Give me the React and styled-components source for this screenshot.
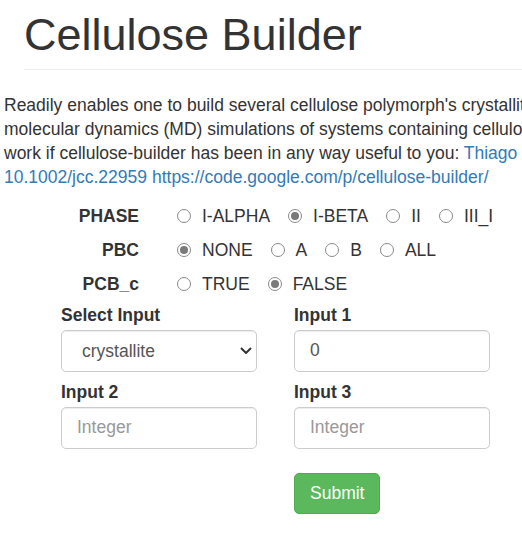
import styled, { createGlobalStyle } from "styled-components";

const GlobalStyle = createGlobalStyle`
	body {
		margin: 0;
		font-family: "Liberation Sans", Arial, Helvetica, sans-serif;
		font-size: 17.5px;
		line-height: 24px;
		color: #333;
		background: #fff;
		overflow-x: hidden;
	}
	* {
		box-sizing: border-box;
	}
`;

const phases = ["I-ALPHA", "I-BETA", "II", "III_I"];
const pbcs = ["NONE", "A", "B", "ALL"];
const pcbc = ["TRUE", "FALSE"];

const RadioRow = ({ label, name, options, checked }) => (
	<>
		<RowLabel>{label}</RowLabel>
		<Options>
			{options.map(opt => (
				<Option key={opt}>
					<Radio
						type="radio"
						name={name}
						value={opt}
						defaultChecked={opt === checked}
					/>
					{opt}
				</Option>
			))}
		</Options>
	</>
);

const App = () => {
	return (
		<Page>
			<GlobalStyle />
			<Header>
				<Title>Cellulose Builder</Title>
			</Header>
			<Intro>
				Readily enables one to build several cellulose polymorph's crystallites for
				<br />
				molecular dynamics (MD) simulations of systems containing cellulose. Please cite the following
				<br />
				work if cellulose-builder has been in any way useful to you:{" "}
				<Link href="#">Thiago C. F. Gomes and Munir S. Skaf, J. Comput. Chem. 2012, 33, 1338, DOI:</Link>
				<br />
				<Link href="#">10.1002/jcc.22959</Link>{" "}
				<Link href="#">https://code.google.com/p/cellulose-builder/</Link>
			</Intro>
			<RadioGrid>
				<RadioRow label="PHASE" name="phase" options={phases} checked="I-BETA" />
				<RadioRow label="PBC" name="pbc" options={pbcs} checked="NONE" />
				<RadioRow label="PCB_c" name="pcbc" options={pcbc} checked="FALSE" />
			</RadioGrid>
			<Form>
				<Group>
					<FieldLabel>Select Input</FieldLabel>
					<SelectWrap>
						<Select defaultValue="crystallite">
							<option value="crystallite">crystallite</option>
							<option value="monolayer">monolayer</option>
							<option value="fibril">fibril</option>
						</Select>
						<Chevron width="12" height="7" viewBox="0 0 12 7">
							<polyline points="1,1 6,6 11,1" />
						</Chevron>
					</SelectWrap>
				</Group>
				<Group>
					<FieldLabel>Input 1</FieldLabel>
					<Input type="text" defaultValue="0" />
				</Group>
				<Group>
					<FieldLabel>Input 2</FieldLabel>
					<Input type="text" placeholder="Integer" />
				</Group>
				<Group>
					<FieldLabel>Input 3</FieldLabel>
					<Input type="text" placeholder="Integer" />
				</Group>
				<Submit type="button">Submit</Submit>
			</Form>
		</Page>
	);
};

export default App;

const Page = styled.div`
	width: 522px;
	padding-bottom: 20px;
`;

const Header = styled.div`
	margin-left: 24px;
	padding: 10px 0 9.5px;
	border-bottom: 1px solid #eee;
`;

const Title = styled.h1`
	margin: 0;
	font-size: 45px;
	font-weight: 500;
	line-height: 49.5px;
	color: #333;
`;

const Intro = styled.p`
	margin: 23px 0 10px 4px;
	white-space: nowrap;
`;

const Link = styled.a`
	color: #337ab7;
	text-decoration: none;
`;

const RadioGrid = styled.div`
	display: grid;
	grid-template-columns: 139px auto;
	column-gap: 38px;
	grid-auto-rows: 34px;
	align-items: center;
`;

const RowLabel = styled.div`
	font-weight: bold;
	text-align: right;
	line-height: 34px;
`;

const Options = styled.div`
	display: flex;
	align-items: center;
	gap: 18px;
	line-height: 34px;
`;

const Option = styled.label`
	display: flex;
	align-items: center;
	gap: 11px;
`;

const Radio = styled.input`
	appearance: none;
	margin: 0;
	width: 14px;
	height: 14px;
	border: 1px solid #8a8a8a;
	border-radius: 50%;
	background: #fff;
	display: grid;
	place-items: center;

	&:checked::after {
		content: "";
		width: 8px;
		height: 8px;
		border-radius: 50%;
		background: #7a7a7a;
	}
`;

const Form = styled.div`
	display: grid;
	grid-template-columns: 195.5px 195.5px;
	column-gap: 37.5px;
	row-gap: 8.5px;
	margin: 2px 0 0 61px;
`;

const Group = styled.div`
	display: flex;
	flex-direction: column;
`;

const FieldLabel = styled.label`
	font-weight: bold;
	line-height: 25px;
	margin-bottom: 1.5px;
`;

const SelectWrap = styled.div`
	position: relative;
`;

const Select = styled.select`
	appearance: none;
	width: 100%;
	height: 42px;
	padding: 0 30px 0 20px;
	border: 1px solid #ccc;
	border-radius: 5px;
	background: #fff;
	font-family: inherit;
	font-size: 17.5px;
	color: #555;
	box-shadow: inset 0 1px 1px rgba(0, 0, 0, 0.075);
`;

const Chevron = styled.svg`
	position: absolute;
	right: 4.5px;
	top: 17.5px;
	fill: none;
	stroke: #333;
	stroke-width: 2;
	pointer-events: none;
`;

const Input = styled.input`
	width: 100%;
	height: 42px;
	padding: 0 15px;
	border: 1px solid #ccc;
	border-radius: 5px;
	font-family: inherit;
	font-size: 17.5px;
	color: #555;
	box-shadow: inset 0 1px 1px rgba(0, 0, 0, 0.075);

	&::placeholder {
		color: #999;
	}
`;

const Submit = styled.button`
	grid-column: 2;
	justify-self: start;
	margin-top: 16px;
	height: 41px;
	padding: 0 15px;
	border: 1px solid #4cae4c;
	border-radius: 5px;
	background: #5cb85c;
	color: #fff;
	font-family: inherit;
	font-size: 17.5px;
	cursor: pointer;
`;
